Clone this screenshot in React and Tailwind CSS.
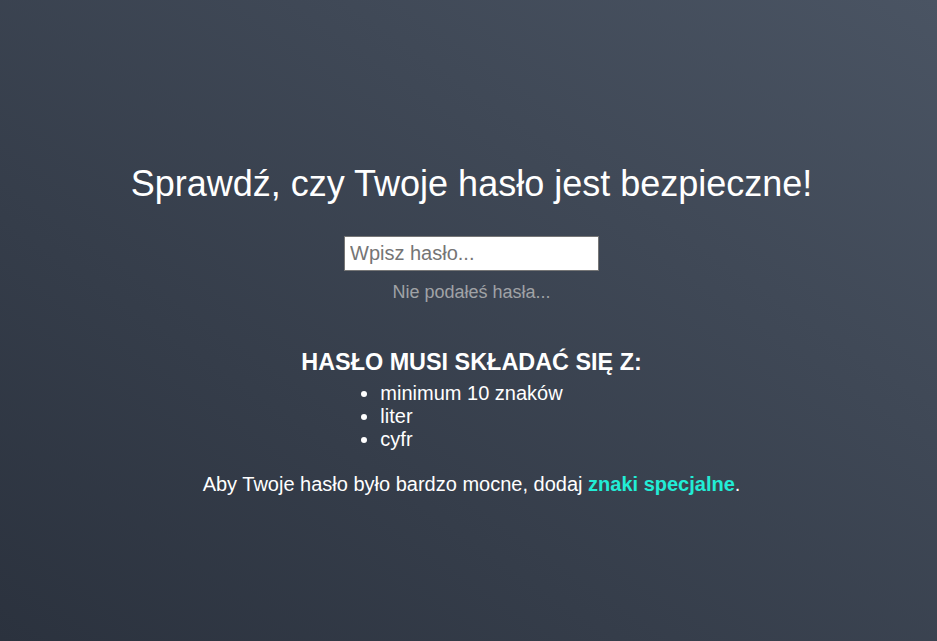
export default function App() {
  return (
    <div
      className="min-h-screen w-full bg-linear-to-tr from-[#2b323e] to-[#4a5463] text-white flex flex-col items-center pl-[6px] pt-[163px]"
      style={{ fontFamily: '"Liberation Sans", Arial, sans-serif' }}
    >
      <h1 className="text-[36px] leading-[41px] font-normal">
        Sprawdź, czy Twoje hasło jest bezpieczne!
      </h1>
      <input
        type="password"
        placeholder="Wpisz hasło..."
        className="mt-[32px] w-[255px] h-[35px] bg-white border border-[#767676] px-[5px] text-[20px] text-black placeholder:text-[#757575] outline-none"
      />
      <p className="mt-[11px] text-[18px] leading-[21px] text-[#a0a2a6]">Nie podałeś hasła...</p>
      <h3 className="mt-[46px] text-[23.4px] leading-[27px] font-bold uppercase">
        Hasło musi składać się z:
      </h3>
      <ul className="mt-[6px] w-fit list-disc list-outside pl-0 text-[20px] leading-[23px]">
        <li>minimum 10 znaków</li>
        <li>liter</li>
        <li>cyfr</li>
      </ul>
      <p className="mt-[22px] text-[20px] leading-[23px]">
        Aby Twoje hasło było bardzo mocne, dodaj{" "}
        <span className="font-bold text-[#22ecd6]">znaki specjalne</span>.
      </p>
    </div>
  );
}
